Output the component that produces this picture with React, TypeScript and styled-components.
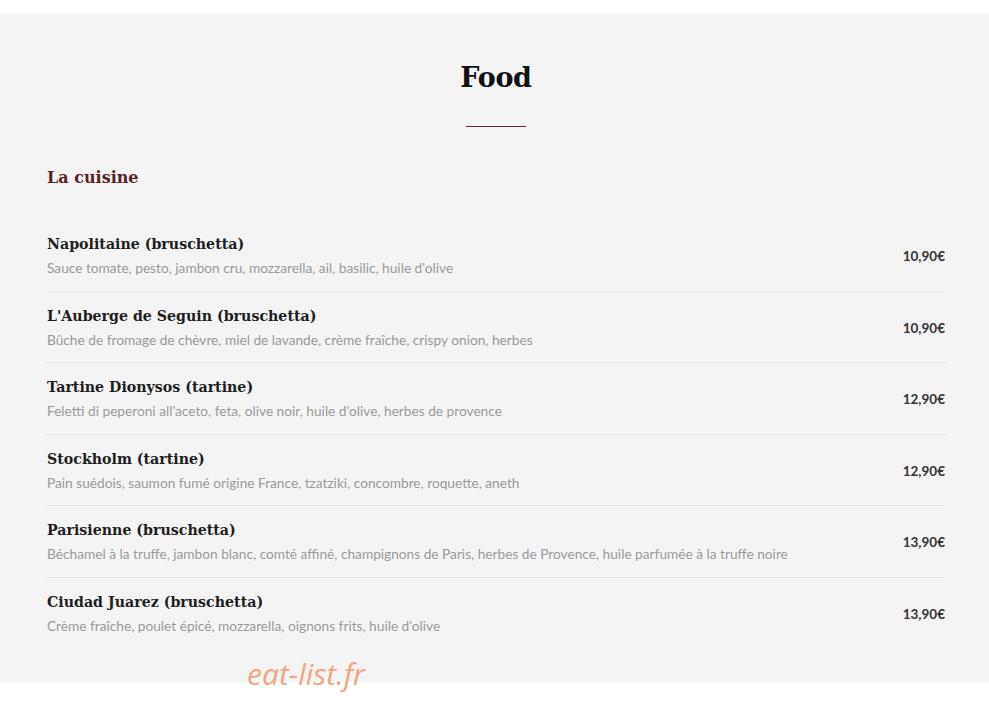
import React from "react";
import styled, { createGlobalStyle } from "styled-components";

const Global = createGlobalStyle`
  html, body { margin: 0; padding: 0; background: #ffffff; }
  body { font-family: "Lato", "Liberation Sans", sans-serif; }
`;

const Page = styled.div`
  position: relative;
  width: 989px;
  height: 701px;
  padding-top: 14px;
  box-sizing: border-box;
  background: #ffffff;
  overflow: hidden;
`;

const Panel = styled.section`
  background: #f4f4f4;
  height: 668px;
  box-sizing: border-box;
  padding: 44px 44px 0 47px;
  display: flex;
  flex-direction: column;
`;

const Title = styled.h1`
  margin: 0;
  text-align: center;
  font-family: "DejaVu Serif", "Liberation Serif", serif;
  font-weight: 700;
  font-size: 27px;
  line-height: 40px;
  color: #111111;
  letter-spacing: -0.3px;
`;

const Divider = styled.div`
  align-self: center;
  width: 60px;
  height: 1px;
  background: #5a2a2e;
  margin: 28px 0 0 0;
`;

const Section = styled.h2`
  margin: 39px 0 30px 0;
  font-family: "DejaVu Serif", "Liberation Serif", serif;
  font-weight: 700;
  font-size: 16px;
  line-height: 24px;
  color: #5b1f27;
`;

const List = styled.div`
  display: flex;
  flex-direction: column;
`;

const Row = styled.div<{ $last?: boolean }>`
  display: flex;
  align-items: center;
  justify-content: space-between;
  padding: 12px 0 10.5px 0;
  border-bottom: ${(p) => (p.$last ? "none" : "1px dotted #e0e0e0")};
`;

const Info = styled.div`
  display: flex;
  flex-direction: column;
`;

const Name = styled.div`
  font-family: "DejaVu Serif", "Liberation Serif", serif;
  font-weight: 700;
  font-size: 14.2px;
  line-height: 24px;
  color: #1e1e1e;
`;

const Desc = styled.div`
  font-family: "Lato", "Liberation Sans", sans-serif;
  font-size: 13.7px;
  line-height: 24px;
  color: #9a9a9a;
`;

const Price = styled.div`
  font-family: "Lato", "Liberation Sans", sans-serif;
  font-weight: 700;
  font-size: 13.5px;
  color: #333333;
`;

const Watermark = styled.div`
  position: absolute;
  left: 247px;
  top: 653px;
  font-family: "Open Sans", sans-serif;
  font-style: italic;
  font-size: 30px;
  color: #f2a584;
`;

const items = [
  { name: "Napolitaine (bruschetta)", desc: "Sauce tomate, pesto, jambon cru, mozzarella, ail, basilic, huile d'olive", price: "10,90€" },
  { name: "L'Auberge de Seguin (bruschetta)", desc: "Bûche de fromage de chèvre, miel de lavande, crème fraîche, crispy onion, herbes", price: "10,90€" },
  { name: "Tartine Dionysos (tartine)", desc: "Feletti di peperoni all'aceto, feta, olive noir, huile d'olive, herbes de provence", price: "12,90€" },
  { name: "Stockholm (tartine)", desc: "Pain suédois, saumon fumé origine France, tzatziki, concombre, roquette, aneth", price: "12,90€" },
  { name: "Parisienne (bruschetta)", desc: "Béchamel à la truffe, jambon blanc, comté affiné, champignons de Paris, herbes de Provence, huile parfumée à la truffe noire", price: "13,90€" },
  { name: "Ciudad Juarez (bruschetta)", desc: "Crème fraîche, poulet épicé, mozzarella, oignons frits, huile d'olive", price: "13,90€" },
];

export default function App() {
  return (
    <>
      <Global />
      <Page>
        <Panel>
          <Title>Food</Title>
          <Divider />
          <Section>La cuisine</Section>
          <List>
            {items.map((it, i) => (
              <Row key={it.name} $last={i === items.length - 1}>
                <Info>
                  <Name>{it.name}</Name>
                  <Desc>{it.desc}</Desc>
                </Info>
                <Price>{it.price}</Price>
              </Row>
            ))}
          </List>
        </Panel>
        <Watermark>eat-list.fr</Watermark>
      </Page>
    </>
  );
}
